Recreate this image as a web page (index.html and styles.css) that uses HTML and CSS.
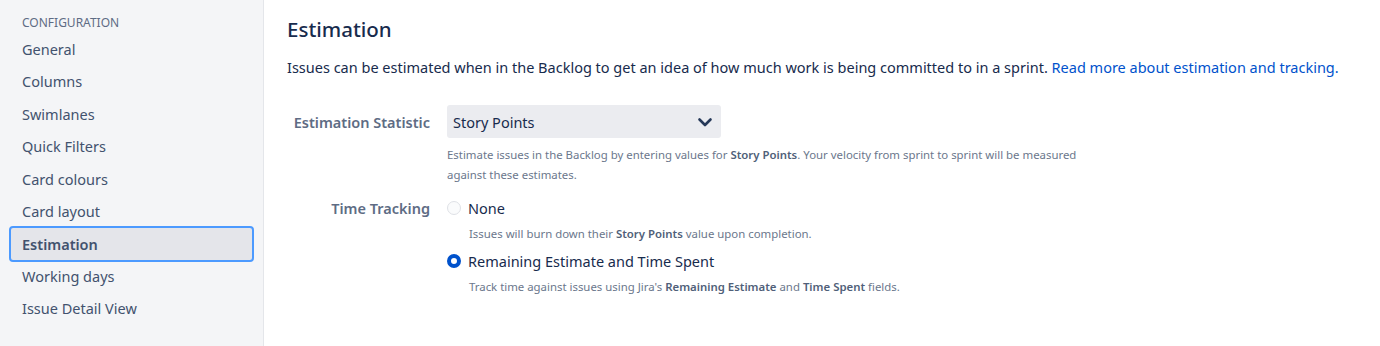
FILE: index.html
```html
<!DOCTYPE html>
<html lang="en">
<head>
  <meta charset="UTF-8" />
  <title>Board settings - Estimation</title>
  <link rel="stylesheet" href="styles.css">
</head>
<body>
  <div class="page">
    <nav class="sidebar">
      <div class="nav-title">Configuration</div>
      <a class="nav-item" href="#">General</a>
      <a class="nav-item" href="#">Columns</a>
      <a class="nav-item" href="#">Swimlanes</a>
      <a class="nav-item" href="#">Quick Filters</a>
      <a class="nav-item" href="#">Card colours</a>
      <a class="nav-item" href="#">Card layout</a>
      <a class="nav-item active" href="#">Estimation</a>
      <a class="nav-item" href="#">Working days</a>
      <a class="nav-item" href="#">Issue Detail View</a>
    </nav>

    <main class="content">
      <h1>Estimation</h1>
      <p class="intro">Issues can be estimated when in the Backlog to get an idea of how much work is being committed to in a sprint. <a href="#">Read more about estimation and tracking.</a></p>

      <div class="field">
        <label class="field-label" for="statistic">Estimation Statistic</label>
        <div class="field-body">
          <div class="select" id="statistic">
            <span>Story Points</span>
            <svg width="16" height="16" viewBox="0 0 16 16"><polyline points="2.5,5.5 8,11 13.5,5.5" fill="none" stroke="#253858" stroke-width="2.6" stroke-linecap="round" stroke-linejoin="round"/></svg>
          </div>
          <p class="help">Estimate issues in the Backlog by entering values for <b>Story Points</b>. Your velocity from sprint to sprint will be measured against these estimates.</p>
        </div>
      </div>

      <div class="field">
        <div class="field-label">Time Tracking</div>
        <div class="field-body">
          <label class="radio">
            <span class="dot"></span>
            None
          </label>
          <p class="help indent">Issues will burn down their <b>Story Points</b> value upon completion.</p>
          <label class="radio">
            <span class="dot checked"></span>
            Remaining Estimate and Time Spent
          </label>
          <p class="help indent">Track time against issues using Jira's <b>Remaining Estimate</b> and <b>Time Spent</b> fields.</p>
        </div>
      </div>
    </main>
  </div>
</body>
</html>
```

FILE: styles.css
```css
* {
  margin: 0;
  padding: 0;
  box-sizing: border-box;
}
body {
  font-family: "Noto Sans", "Open Sans", sans-serif;
  color: #172b4d;
  background: #fff;
  font-size: 14.5px;
}
.page {
  display: flex;
  min-height: 346px;
}
.sidebar {
  width: 264px;
  flex-shrink: 0;
  background: #f4f5f7;
  border-right: 1px solid #e4e6ea;
  padding: 14px 9px 0 9px;
  display: flex;
  flex-direction: column;
}
.nav-title {
  font-size: 12px;
  text-transform: uppercase;
  color: #5e6c84;
  padding-left: 13px;
  height: 18px;
  line-height: 18px;
  margin-bottom: 1px;
}
.nav-item {
  display: block;
  height: 32.4px;
  line-height: 28.4px;
  padding-left: 11px;
  color: #42526e;
  text-decoration: none;
  border: 2px solid transparent;
  border-radius: 4px;
}
.nav-item.active {
  background: #e4e5ea;
  border-color: #4c9aff;
  font-weight: 600;
  height: 36px;
  line-height: 32px;
  margin: -1.8px 0;
}
.content {
  padding: 13px 23px 0 23px;
  flex: 1;
}
h1 {
  font-size: 20.5px;
  font-weight: 500;
  line-height: 32px;
  color: #172b4d;
  margin-bottom: 12px;
}
.intro {
  line-height: 20px;
  margin-bottom: 28px;
}
.intro a {
  color: #0052cc;
  text-decoration: none;
}
.field {
  display: flex;
  margin-bottom: 13px;
}
.field-label {
  width: 160px;
  text-align: right;
  padding-right: 17px;
  color: #5e6c84;
  font-weight: 600;
  line-height: 20px;
  padding-top: 7px;
  flex-shrink: 0;
  white-space: nowrap;
}
.field:last-child .field-label {
  padding-top: 0;
}
.field-body {
  flex: 1;
}
.select {
  width: 274px;
  height: 33px;
  background: #ebecf0;
  border-radius: 3px;
  display: flex;
  align-items: center;
  justify-content: space-between;
  padding: 0 8px 0 6px;
  color: #172b4d;
}
.help {
  font-size: 11.4px;
  color: #6b778c;
  line-height: 20px;
  max-width: 650px;
  margin-top: 7px;
}
.help b {
  font-weight: 600;
  color: #505f79;
}
.help.indent {
  margin: 6px 0 7px 22px;
}
.radio {
  display: flex;
  align-items: center;
  gap: 7px;
  line-height: 20px;
  color: #172b4d;
}
.dot {
  width: 14px;
  height: 14px;
  border-radius: 50%;
  border: 1.5px solid #dfe1e6;
  background: #fafbfc;
}
.dot.checked {
  border: 4px solid #0052cc;
  background: #fff;
}
```
